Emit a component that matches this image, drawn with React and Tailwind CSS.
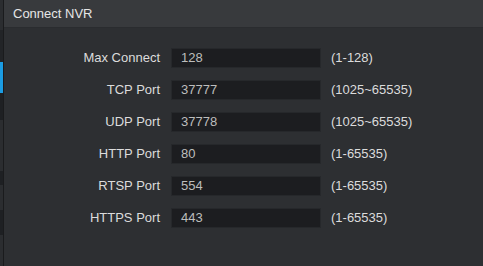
import React from 'react'

const rows = [
  { label: 'Max Connect', value: '128', range: '(1-128)' },
  { label: 'TCP Port', value: '37777', range: '(1025~65535)' },
  { label: 'UDP Port', value: '37778', range: '(1025~65535)' },
  { label: 'HTTP Port', value: '80', range: '(1-65535)' },
  { label: 'RTSP Port', value: '554', range: '(1-65535)' },
  { label: 'HTTPS Port', value: '443', range: '(1-65535)' },
]

export default function App() {
  return (
    <div
      className="flex w-[483px] h-[266px] overflow-hidden bg-[#2d2f32] text-[13px]"
      style={{ fontFamily: '"Liberation Sans", Arial, sans-serif' }}
    >
      {/* side strip of the parent menu */}
      <div className="flex flex-col w-[3px] shrink-0">
        <div className="h-[30px] bg-[#2b2d30]" />
        <div className="h-[32px] bg-[#222427]" />
        <div className="h-[31px] bg-[#1b9ce3]" />
        <div className="h-[27px] bg-[#1e2023]" />
        <div className="h-[51px] bg-[#2b2d30]" />
        <div className="h-[14px] bg-[#1e2023]" />
        <div className="h-[25px] bg-[#2b2d30]" />
        <div className="h-[25px] bg-[#1e2023]" />
        <div className="flex-1 bg-[#2b2d30]" />
      </div>
      <div className="w-px shrink-0 bg-[#1a1b1d]" />

      <div className="flex flex-col flex-1">
        <div className="h-[28px] flex items-center pl-[9px] bg-[#383a3d] border-b border-[#2a2c2f] text-[#e6e6e6]">
          Connect NVR
        </div>
        <div className="flex flex-col gap-[12px] pt-[20px]">
          {rows.map((r) => (
            <div key={r.label} className="flex items-center h-[20px]">
              <div className="w-[156px] text-right text-[#dcdcdc]">{r.label}</div>
              <div className="ml-[11px] w-[150px] h-[20px] flex items-center pl-[9px] bg-[#1c1d20] border border-[#26282b] text-[#bdbdbd]">
                {r.value}
              </div>
              <div className="ml-[10px] text-[#dcdcdc]">{r.range}</div>
            </div>
          ))}
        </div>
      </div>
    </div>
  )
}
